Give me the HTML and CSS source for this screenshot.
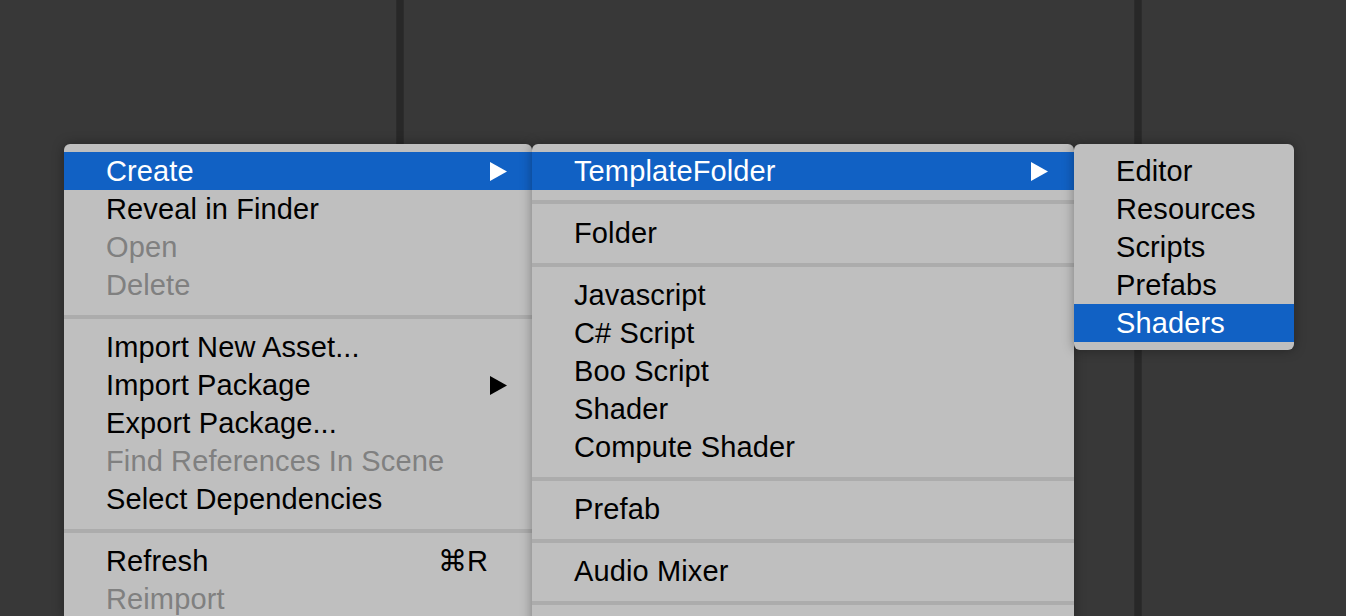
FILE: index.html
```html
<!DOCTYPE html>
<html>
<head>
<meta charset="utf-8">
<link rel="stylesheet" href="styles.css">
</head>
<body>
<div class="desktop">
  <div class="panel panel-left"></div>
  <div class="divider"></div>
  <div class="panel panel-mid"></div>
  <div class="divider"></div>
  <div class="panel panel-right"></div>
</div>

<div class="menus">
  <div class="menu menu-main">
    <div class="item active"><span>Create</span><svg class="arrow" viewBox="0 0 17 19"><path d="M0 0 L17 9.5 L0 19 Z"/></svg></div>
    <div class="item"><span>Reveal in Finder</span></div>
    <div class="item disabled"><span>Open</span></div>
    <div class="item disabled"><span>Delete</span></div>
    <div class="sep"></div>
    <div class="item"><span>Import New Asset...</span></div>
    <div class="item"><span>Import Package</span><svg class="arrow" viewBox="0 0 17 19"><path d="M0 0 L17 9.5 L0 19 Z"/></svg></div>
    <div class="item"><span>Export Package...</span></div>
    <div class="item disabled"><span>Find References In Scene</span></div>
    <div class="item"><span>Select Dependencies</span></div>
    <div class="sep"></div>
    <div class="item"><span>Refresh</span><span class="shortcut">⌘R</span></div>
    <div class="item disabled"><span>Reimport</span></div>
  </div>

  <div class="menu menu-create">
    <div class="item active"><span>TemplateFolder</span><svg class="arrow" viewBox="0 0 17 19"><path d="M0 0 L17 9.5 L0 19 Z"/></svg></div>
    <div class="sep sep-first"></div>
    <div class="item"><span>Folder</span></div>
    <div class="sep"></div>
    <div class="item"><span>Javascript</span></div>
    <div class="item"><span>C# Script</span></div>
    <div class="item"><span>Boo Script</span></div>
    <div class="item"><span>Shader</span></div>
    <div class="item"><span>Compute Shader</span></div>
    <div class="sep"></div>
    <div class="item"><span>Prefab</span></div>
    <div class="sep"></div>
    <div class="item"><span>Audio Mixer</span></div>
    <div class="sep"></div>
  </div>

  <div class="menu menu-template">
    <div class="item"><span>Editor</span></div>
    <div class="item"><span>Resources</span></div>
    <div class="item"><span>Scripts</span></div>
    <div class="item"><span>Prefabs</span></div>
    <div class="item active"><span>Shaders</span></div>
  </div>
</div>
</body>
</html>
```

FILE: styles.css
```css
html, body {
  margin: 0;
  padding: 0;
  width: 1346px;
  height: 616px;
  overflow: hidden;
  background: #383838;
  font-family: "Liberation Sans", Arial, Helvetica, sans-serif;
}

.desktop {
  display: flex;
  height: 616px;
}

.panel {
  background: #383838;
}

.panel-left { width: 396px; }
.panel-mid { width: 730px; }
.panel-right { flex: 1; }

.divider {
  width: 8px;
  box-sizing: border-box;
  background: #282828;
  border-left: 1px solid #2c2c2c;
  border-right: 1px solid #2c2c2c;
}

.menus {
  position: absolute;
  left: 44px;
  top: 124px;
  height: 472px;
  padding: 20px 20px 0 20px;
  overflow: hidden;
  display: flex;
  align-items: flex-start;
}

.menu {
  position: relative;
  background: #bfbfbf;
  padding-top: 8px;
  border-radius: 6px 6px 0 0;
  box-shadow: 0 0 12px rgba(0, 0, 0, 0.35);
}

.menu-main {
  width: 468px;
  z-index: 1;
}

.menu-create {
  width: 542px;
  padding-bottom: 40px;
  z-index: 2;
}

.menu-template {
  width: 220px;
  padding-bottom: 8px;
  border-radius: 6px;
  z-index: 3;
}

.item {
  display: flex;
  align-items: center;
  justify-content: space-between;
  height: 38px;
  line-height: 38px;
  padding-left: 42px;
  padding-right: 25px;
  font-size: 29px;
  letter-spacing: 0.12px;
  color: #000;
  white-space: nowrap;
}

.menu-create .item,
.menu-template .item {
  padding-left: 42px;
  padding-right: 26px;
}

.item.active {
  background: #1161c4;
  color: #fff;
}

.item.disabled {
  color: #808080;
}

.arrow {
  width: 17px;
  height: 19px;
  fill: #000;
}

.item.active .arrow {
  fill: #fff;
}

.shortcut {
  padding-right: 19px;
  letter-spacing: 0;
}

.sep {
  height: 24px;
  box-sizing: border-box;
  padding-top: 11px;
}

.sep::before {
  content: "";
  display: block;
  height: 4px;
  background: #acacac;
}

.sep-first {
  padding-top: 10px;
}
```
